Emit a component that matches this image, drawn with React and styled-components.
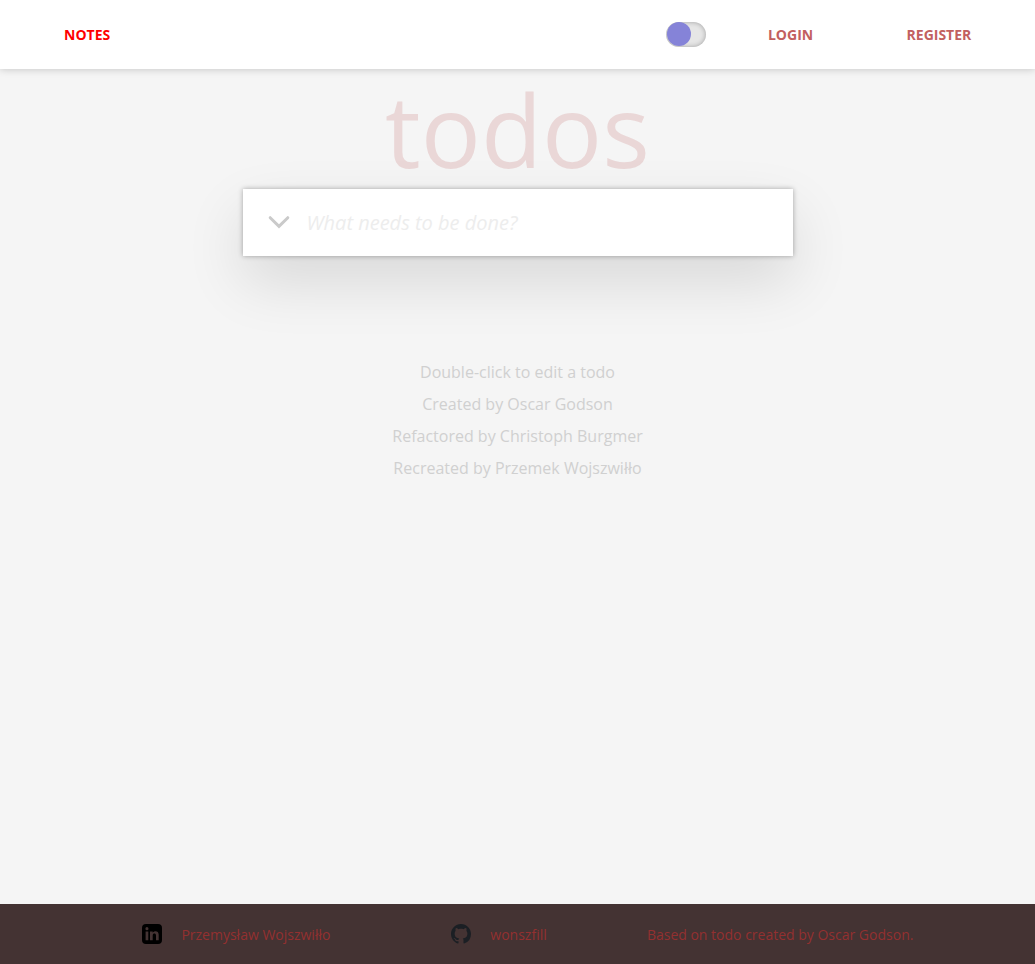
import React from 'react';
import styled, { createGlobalStyle } from 'styled-components';

const Global = createGlobalStyle`
  *, *::before, *::after { box-sizing: border-box; }
  body { margin: 0; background: #f5f5f5; font-family: "Open Sans", sans-serif; }
`;
const Page = styled.div`
  display: flex;
  flex-direction: column;
  min-height: 100vh;
`;
const Nav = styled.nav`
  display: flex;
  align-items: center;
  height: 69px;
  padding: 0 63.7px 0 64px;
  background: #fff;
  box-shadow: 0 0 8px rgba(0, 0, 0, 0.22);
`;
const NavLink = styled.a`
  font-size: 14px;
  line-height: 20px;
  font-weight: 700;
  text-transform: uppercase;
  color: ${(p) => (p.$active ? '#f00' : '#c26060')};
  margin-left: ${(p) => p.$gap || 0}px;
`;
const Switch = styled.button`
  display: flex;
  width: 40px;
  height: 25px;
  margin-left: auto;
  padding: 0 0 0 1px;
  border: 0;
  border-radius: 13px;
  background: #e6e6e6;
  box-shadow: inset 0 0 5px rgba(0, 0, 0, 0.3);
`;
const Knob = styled.span`
  width: 24px;
  height: 24px;
  border-radius: 50%;
  background: #8583d8;
`;
const Main = styled.main`
  flex: 1;
  display: flex;
  flex-direction: column;
  align-items: center;
`;
const Title = styled.h1`
  margin: 0;
  height: 120px;
  font-size: 100px;
  line-height: 121px;
  font-weight: 400;
  color: rgba(175, 47, 47, 0.15);
`;
const Form = styled.form`
  display: flex;
  align-items: center;
  width: 550px;
  height: 67px;
  padding-left: 26px;
  background: #fff;
  box-shadow: 0 0 5px rgba(0, 0, 0, 0.32), 0 25px 60px rgba(0, 0, 0, 0.12);
`;
const Input = styled.input`
  flex: 1;
  margin-left: 18px;
  padding: 0;
  border: 0;
  outline: 0;
  background: none;
  font: 400 20px "Open Sans", sans-serif;
  &::placeholder { color: #ededed; font-style: italic; opacity: 1; }
`;
const Info = styled.section`
  margin-top: 100px;
  text-align: center;
  color: #d0d0d0;
  font-size: 16px;
  line-height: 32px;
  p { margin: 0; }
`;
const Footer = styled.footer`
  display: flex;
  align-items: center;
  height: 60px;
  padding-left: 142px;
  background: #433;
  color: #933030;
  font-size: 14px;
`;
const Credit = styled.a`
  display: flex;
  align-items: center;
  gap: 19.4px;
  margin-right: ${(p) => p.$gap || 0}px;
`;

const LinkedInIcon = () => (
  <svg width="20" height="20" viewBox="0 0 20 20">
    <path
      fillRule="evenodd"
      d="M4 0h12a4 4 0 0 1 4 4v12a4 4 0 0 1-4 4H4a4 4 0 0 1-4-4V4a4 4 0 0 1 4-4ZM3.6 7.5v8.8h2.7V7.5ZM4.95 3.1a1.55 1.55 0 1 0 0 3.1 1.55 1.55 0 0 0 0-3.1ZM8 7.5v8.8h2.7v-4.8c0-2.6 3.3-2.6 3.3 0v4.8h2.7v-5.5c0-4.2-4.4-4.3-6-2V7.5Z"
    />
  </svg>
);

const GitHubIcon = () => (
  <svg width="20" height="20" viewBox="0 0 16 16" fill="#1b1f24">
    <path d="M8 0C3.58 0 0 3.58 0 8c0 3.54 2.29 6.53 5.47 7.59.4.07.55-.17.55-.38 0-.19-.01-.82-.01-1.49-2.01.37-2.53-.49-2.69-.94-.09-.23-.48-.94-.82-1.13-.28-.15-.68-.52-.01-.53.63-.01 1.08.58 1.23.82.72 1.21 1.87.87 2.33.66.07-.52.28-.87.51-1.07-1.78-.2-3.64-.89-3.64-3.95 0-.87.31-1.59.82-2.15-.08-.2-.36-1.02.08-2.12 0 0 .67-.21 2.2.82.64-.18 1.32-.27 2-.27s1.36.09 2 .27c1.53-1.04 2.2-.82 2.2-.82.44 1.1.16 1.92.08 2.12.51.56.82 1.27.82 2.15 0 3.07-1.87 3.75-3.65 3.95.29.25.54.73.54 1.48 0 1.07-.01 1.93-.01 2.2 0 .21.15.46.55.38A8.01 8.01 0 0 0 16 8c0-4.42-3.58-8-8-8Z" />
  </svg>
);

const ChevronIcon = () => (
  <svg width="20" height="14" viewBox="0 0 20 14" overflow="visible">
    <path d="M1.2 1.7 10 10.3 18.8 1.7" fill="none" stroke="#cacaca" strokeWidth="3" strokeLinecap="round" />
  </svg>
);

export default function App() {
  return (
    <Page>
      <Global />
      <Nav>
        <NavLink $active>Notes</NavLink>
        <Switch><Knob /></Switch>
        <NavLink $gap={62}>Login</NavLink>
        <NavLink $gap={93.4}>Register</NavLink>
      </Nav>
      <Main>
        <Title>todos</Title>
        <Form>
          <ChevronIcon />
          <Input placeholder="What needs to be done?" />
        </Form>
        <Info>
          <p>Double-click to edit a todo</p>
          <p>Created by Oscar Godson</p>
          <p>Refactored by Christoph Burgmer</p>
          <p>Recreated by Przemek Wojszwiłło</p>
        </Info>
      </Main>
      <Footer>
        <Credit $gap={120.5}><LinkedInIcon />Przemysław Wojszwiłło</Credit>
        <Credit $gap={100.2}><GitHubIcon />wonszfill</Credit>
        <Credit>Based on todo created by Oscar Godson.</Credit>
      </Footer>
    </Page>
  );
}
